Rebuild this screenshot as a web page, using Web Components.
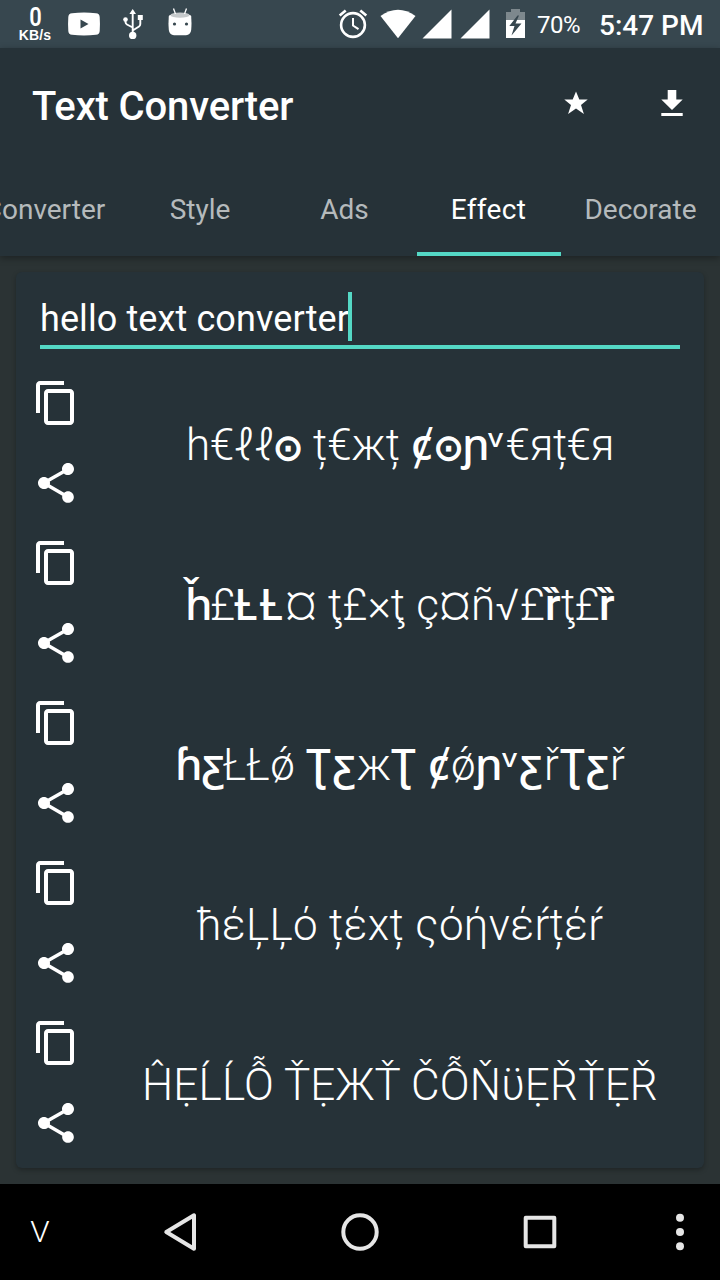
<!DOCTYPE html>
<html lang="en"><head><meta charset="utf-8"><title>Text Converter</title>
<style>
html,body{margin:0;height:100%;background:#2b3334}
body{font-family:Roboto,"Noto Sans","DejaVu Sans",sans-serif;color:#fff;overflow:hidden}
</style></head><body>
<converter-app></converter-app>
<script>
const define=(name,html,setup)=>customElements.define(name,class extends HTMLElement{
  connectedCallback(){
    if(this.shadowRoot)return;
    const t=document.createElement('template');t.innerHTML=html;
    this.attachShadow({mode:'open'}).append(t.content.cloneNode(true));
    if(setup)setup(this,this.shadowRoot);
  }
});

define('status-bar',`<style>
:host{display:flex;height:48px;background:#37474f;box-sizing:border-box;padding-left:16px;align-items:flex-start;overflow:hidden}
svg{display:block;flex:none;height:48px}
.net{width:38px;flex:none;height:48px;padding-top:6px;box-sizing:border-box;display:flex;flex-direction:column;align-items:center}
.net b{font-size:26px;font-weight:600;line-height:23px;height:23px;transform:scaleX(.84)}
.net span{font:bold 14px/13px "Liberation Sans",sans-serif;white-space:nowrap;letter-spacing:.2px}
.pct{font-size:24px;line-height:50px;width:50px;margin-left:8px;white-space:nowrap;flex:none;letter-spacing:-.5px}
.time{font-size:28px;font-weight:500;line-height:51px;margin-left:12px;white-space:nowrap}
</style>
<div class="net"><b>0</b><span>KB/s</span></div>
<svg width="150" viewBox="54 0 150 48" fill="#fff">
 <path fill-rule="evenodd" d="M72 13.2Q84 12 96 13.2Q99.500 13.500 99.700 17Q100.200 24 99.700 31Q99.500 34.500 96 34.800Q84 36 72 34.800Q68.500 34.500 68.300 31Q67.800 24 68.300 17Q68.500 13.500 72 13.200ZM80.500 19.500V28.500L88.500 24Z"/>
 <g fill="none" stroke="#fff" stroke-width="1.900"><path d="M132.700 36V12M132.700 30.500L139 26.500Q140.300 25.500 140.300 24V19M132.700 27.500L127 24.500Q125.500 23.500 125.500 22V20"/></g>
 <circle cx="132.700" cy="35.400" r="3.700"/><circle cx="125.500" cy="19.500" r="2.300"/><path d="M132.700 9L136 14H129.400ZM137.800 15H142.800V20H137.800Z"/>
 <path d="M168.800 16Q169 14 180 14Q191 14 191.200 16Q191.800 24 191.200 30Q190.500 35 186 35.200H174Q169.500 35 168.800 30Q168.200 24 168.800 16Z"/>
 <ellipse cx="180" cy="15.200" rx="9.500" ry="2.600" fill="#c6cacc"/><path d="M173.500 8.500L175.500 14M186.500 8.500L184.500 14" stroke="#fff" stroke-width="1.300"/><circle cx="174.500" cy="24" r="1.600" fill="#37474f"/><circle cx="186.500" cy="24" r="1.600" fill="#37474f"/>
</svg>
<svg width="325" viewBox="204 0 325 48" fill="#fff">
 <g fill="none" stroke="#fff"><circle cx="353" cy="25" r="11.900" stroke-width="2.600"/><path d="M353 18V25.500L358.500 29.200" stroke-width="2"/><path d="M339.700 15.600L345.700 10.500M366.300 15.600L360.300 10.500" stroke-width="2.600"/></g>
 <path d="M380.500 16Q398 3.500 415.500 16L398 38.300Z"/>
 <path d="M422.500 38.500L451.500 9.500V38.500ZM460.500 38.500L489.500 9.500V38.500Z"/>
 <path fill="#7d888d" d="M511 9H520V12H525V20H506V12H511Z"/><path d="M506 20H525V38H506Z"/><path fill="#37474f" d="M517.500 15.500L509.300 26H514.500L511.500 35.500L521.500 23.500H515.500L519 15.500Z"/>
</svg>
<span class="pct">70%</span><span class="time">5:47 PM</span>`);

define('tab-item',`<style>
:host{display:block;flex:none;box-sizing:border-box;height:96px;padding-top:4px;text-align:center;font-size:28px;line-height:92px;color:#b5babc;white-space:nowrap}
:host([active]){color:#fff;letter-spacing:.3px;padding-right:1px;box-shadow:inset 0 -4px #54d8c5}
</style><slot></slot>`);

define('app-header',`<style>
:host{display:block;position:relative;height:208px;background:#263238;box-shadow:0 2px 7px rgba(0,0,0,.34)}
.bar{height:112px;display:flex;align-items:center;padding-left:32px}
h1{margin:5px 0 0;font-size:40px;font-weight:500;line-height:48px;flex:1;letter-spacing:-.15px}
svg{display:block;flex:none;width:96px;height:96px}
nav{height:96px;display:flex;justify-content:flex-end;align-items:flex-start;overflow:hidden}
tab-item:nth-child(1){width:167px}tab-item:nth-child(2){width:144px}tab-item:nth-child(3){width:145px}tab-item:nth-child(4){width:144px}tab-item:nth-child(5){width:159px}
</style>
<div class="bar"><h1>Text Converter</h1>
<svg viewBox="0 0 96 96" fill="#fff"><path d="M48 35.500L51.300 43.600H59.700L53 49L55.900 58L48 52.400L40.100 58L43 49L36.300 43.600H44.700Z"/></svg>
<svg viewBox="0 0 96 96" fill="#fff"><path d="M43.700 34H52.300V43.500H58.700L48 54L37.300 43.500H43.700ZM37.300 57H58.700V60H37.300Z"/></svg></div>
<nav><tab-item>Converter</tab-item><tab-item>Style</tab-item><tab-item>Ads</tab-item><tab-item active>Effect</tab-item><tab-item>Decorate</tab-item></nav>`);

define('text-entry',`<style>
:host{display:flex;box-sizing:border-box;height:57px;margin:0 24px;border-bottom:4px solid #54d8c5;font-size:36px;line-height:55px;letter-spacing:.1px;white-space:nowrap}
i{width:4px;height:49px;background:#54d8c5;margin-left:-1px}
</style><slot></slot><i></i>`);

define('glyph-run',`<style>
:host{display:block;flex:none;white-space:pre}
:host([heavy]){font-weight:500}
:host([ring]){font-family:"DejaVu Sans";font-weight:400;font-size:36px;-webkit-text-stroke:1.3px #fff}
</style><span><slot></slot></span>`,(el,root)=>{
  const w=+el.getAttribute('w'),span=root.querySelector('span');
  const n=[...el.textContent].length;
  el.style.width=w+'px';
  if(el.hasAttribute('ring'))el.style.textIndent=(w-span.getBoundingClientRect().width)/2+'px';
  else span.style.letterSpacing=(w-span.getBoundingClientRect().width)/n+'px';
});

define('effect-row',`<style>
:host{display:flex;height:160px}
.acts{width:80px;flex:none;display:flex;flex-direction:column}
svg{display:block;width:48px;height:48px;padding:16px}
.text{flex:1;display:flex;align-items:baseline;justify-content:center;font-size:44px;font-weight:300;line-height:52px;padding-top:56px}
</style>
<div class="acts"><svg viewBox="0 0 24 24" fill="#fff"><path d="M16 1H4c-1.100 0-2 .9-2 2v14h2V3h12V1zm3 4H8c-1.100 0-2 .9-2 2v14c0 1.100.9 2 2 2h11c1.100 0 2-.9 2-2V7c0-1.100-.9-2-2-2zm0 16H8V7h11v14z"/></svg>
<svg viewBox="0 0 24 24" fill="#fff"><path d="M18 16.080c-.76 0-1.440.3-1.960.77L8.910 12.700c.05-.23.09-.46.09-.7s-.04-.47-.09-.7l7.050-4.110c.54.5 1.250.81 2.040.81 1.660 0 3-1.340 3-3s-1.340-3-3-3-3 1.340-3 3c0 .24.04.47.09.7L8.040 9.810C7.500 9.310 6.790 9 6 9c-1.660 0-3 1.340-3 3s1.340 3 3 3c.79 0 1.500-.31 2.040-.81l7.120 4.160c-.05.21-.08.43-.08.65 0 1.610 1.310 2.920 2.920 2.920s2.920-1.310 2.920-2.920-1.310-2.920-2.920-2.920z"/></svg></div>
<div class="text"><slot></slot></div>`);

define('nav-bar',`<style>
:host{display:grid;grid-template-columns:80px 200px 160px 200px 80px;grid-template-rows:96px;justify-items:center;align-items:center;height:96px;background:#000}
span{font-size:29px;font-weight:300;line-height:96px;transform:scaleX(1.08)}
svg{display:block;width:48px;height:48px;fill:none;stroke:#e6e6e6;stroke-width:4;stroke-linejoin:round}
</style><span>V</span>
<svg viewBox="0 0 48 48"><path d="M38 7.300V40.700L10.300 24Z"/></svg>
<svg viewBox="0 0 48 48"><circle cx="24" cy="24" r="16.700"/></svg>
<svg viewBox="0 0 48 48"><path d="M9.700 9.700H38.300V38.300H9.700Z"/></svg>
<svg viewBox="0 0 48 48" style="fill:#e6e6e6;stroke:none"><circle cx="24" cy="9.800" r="4"/><circle cx="24" cy="24" r="4"/><circle cx="24" cy="38.200" r="4"/></svg>`);

define('converter-app',`<style>
:host{display:flex;flex-direction:column;width:720px;height:1280px}
main{flex:1;padding:16px}
section{box-sizing:border-box;height:896px;padding-top:20px;border-radius:6px;background:#263238;box-shadow:0 2px 5px rgba(0,0,0,.28);overflow:hidden}
.list{margin-top:14px}
</style><status-bar></status-bar><app-header></app-header>
<main><section><text-entry>hello text converter</text-entry>
<div class="list">
<effect-row><glyph-run w="88">h€ℓℓ</glyph-run><glyph-run w="28" ring>⊙</glyph-run><glyph-run w="109"> ț€жț </glyph-run><glyph-run w="24" heavy>ȼ</glyph-run><glyph-run w="27" ring>⊙</glyph-run><glyph-run w="26" heavy>ɲ</glyph-run><glyph-run w="17.5" heavy>ᵛ</glyph-run><glyph-run w="108.5">€яț€я</glyph-run></effect-row>
<effect-row><glyph-run w="25" heavy>ȟ</glyph-run><glyph-run w="24">£</glyph-run><glyph-run w="51" heavy>ȽȽ</glyph-run><glyph-run w="260">¤ ţ£×ţ ç¤ñ√£</glyph-run><glyph-run w="16" heavy>ȑ</glyph-run><glyph-run w="38">ţ£</glyph-run><glyph-run w="16" heavy>ȑ</glyph-run></effect-row>
<effect-row><glyph-run w="48" heavy>ɦƹ</glyph-run><glyph-run w="83">ŁŁǿ </glyph-run><glyph-run w="51" heavy>Ʈƹ</glyph-run><glyph-run w="34">ж</glyph-run><glyph-run w="37" heavy>Ʈ </glyph-run><glyph-run w="23" heavy>ȼ</glyph-run><glyph-run w="24">ǿ</glyph-run><glyph-run w="27" heavy>ɲ</glyph-run><glyph-run w="17" heavy>ᵛ</glyph-run><glyph-run w="25" heavy>ƹ</glyph-run><glyph-run w="16">ř</glyph-run><glyph-run w="50" heavy>Ʈƹ</glyph-run><glyph-run w="15">ř</glyph-run></effect-row>
<effect-row><glyph-run w="407">ħέĻĻό țέxț ςόήvέŕțέŕ</glyph-run></effect-row>
<effect-row><glyph-run w="516">ĤẸĹĹỖ ŤẸЖŤ ČỖŇϋẸŘŤẸŘ</glyph-run></effect-row>
</div></section></main><nav-bar></nav-bar>`);
</script></body></html>
